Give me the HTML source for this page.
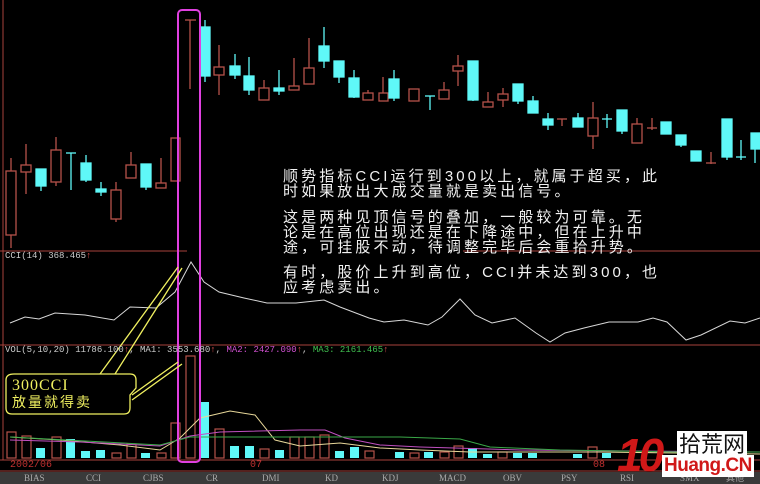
<!DOCTYPE html>
<html><head><meta charset="utf-8"><style>
body{margin:0;background:#000;width:760px;height:484px;overflow:hidden;position:relative;font-family:"Liberation Sans","Noto Sans CJK SC",sans-serif}
.t{position:absolute;left:283px;color:#f2f2f2;font-size:15px;line-height:15px;letter-spacing:3.1px;font-family:"Liberation Sans","Noto Sans CJK SC",sans-serif;white-space:nowrap}
.s{font-family:"Liberation Mono",monospace;font-size:9px;position:absolute;white-space:pre}
.tab{position:absolute;top:472px;height:12px;background:#3a3a3a;width:760px;left:0}
.tab span{position:absolute;top:0;font-family:"Liberation Serif",serif;font-size:9px;color:#aaa;line-height:12px}
</style></head><body>
<svg width="760" height="484" style="position:absolute;left:0;top:0">
<g stroke="#a8423c" fill="none" stroke-width="1">
<line x1="3" y1="0" x2="3" y2="460"/>
<line x1="0" y1="251" x2="187" y2="251"/><line x1="463" y1="251" x2="760" y2="251"/>
<line x1="0" y1="345" x2="760" y2="345"/>
<line x1="0" y1="460" x2="760" y2="460"/>
<line x1="0" y1="471" x2="760" y2="471"/>
</g>
<g stroke="#b5524a" fill="none" stroke-width="1.3">
<line x1="11" y1="158" x2="11" y2="248"/><rect x="6" y="171" width="10" height="64" fill="#000"/>
<line x1="26" y1="144" x2="26" y2="194"/><rect x="21" y="165" width="10" height="7" fill="#000"/>
<line x1="56" y1="137" x2="56" y2="186"/><rect x="51" y="150" width="10" height="32" fill="#000"/>
<line x1="116" y1="182" x2="116" y2="222"/><rect x="111" y="190" width="10" height="29" fill="#000"/>
<line x1="131" y1="152" x2="131" y2="178"/><rect x="126" y="165" width="10" height="13" fill="#000"/>
<line x1="161" y1="158" x2="161" y2="188"/><rect x="156" y="183" width="10" height="5" fill="#000"/>
<rect x="171" y="138" width="9" height="43" fill="#000"/>
<line x1="190" y1="20" x2="190" y2="89"/><line x1="185" y1="20" x2="196" y2="20"/>
<line x1="219" y1="45" x2="219" y2="95"/><rect x="214" y="67" width="10" height="8" fill="#000"/>
<line x1="264" y1="80" x2="264" y2="100"/><rect x="259" y="88" width="10" height="12" fill="#000"/>
<line x1="294" y1="58" x2="294" y2="90"/><rect x="289" y="86" width="10" height="4" fill="#000"/>
<line x1="309" y1="38" x2="309" y2="84"/><rect x="304" y="68" width="10" height="16" fill="#000"/>
<line x1="368" y1="90" x2="368" y2="100"/><rect x="363" y="93" width="10" height="7" fill="#000"/>
<line x1="383" y1="77" x2="383" y2="101"/><rect x="379" y="93" width="9" height="8" fill="#000"/>
<rect x="409" y="89" width="10" height="12" fill="#000"/>
<line x1="444" y1="82" x2="444" y2="99"/><rect x="439" y="90" width="10" height="9" fill="#000"/>
<line x1="458" y1="55" x2="458" y2="86"/><rect x="453" y="66" width="10" height="5" fill="#000"/>
<line x1="488" y1="92" x2="488" y2="107"/><rect x="483" y="102" width="10" height="5" fill="#000"/>
<line x1="503" y1="88" x2="503" y2="107"/><rect x="498" y="94" width="10" height="6" fill="#000"/>
<line x1="562" y1="119" x2="562" y2="126"/><line x1="557" y1="119" x2="567" y2="119"/>
<line x1="593" y1="102" x2="593" y2="149"/><rect x="588" y="118" width="10" height="18" fill="#000"/>
<line x1="637" y1="118" x2="637" y2="143"/><rect x="632" y="124" width="10" height="19" fill="#000"/>
<line x1="652" y1="118" x2="652" y2="130"/><line x1="647" y1="128" x2="657" y2="128"/>
<line x1="711" y1="152" x2="711" y2="164"/><line x1="706" y1="163" x2="716" y2="163"/>
</g>
<g stroke="#5ff8f8" fill="#5ff8f8" stroke-width="1.3">
<line x1="41" y1="169" x2="41" y2="191"/><rect x="36" y="169" width="10" height="17"/>
<line x1="71" y1="153" x2="71" y2="190"/><line x1="66" y1="153" x2="76" y2="153"/>
<line x1="86" y1="155" x2="86" y2="182"/><rect x="81" y="163" width="10" height="17"/>
<line x1="101" y1="182" x2="101" y2="196"/><rect x="96" y="189" width="10" height="3"/>
<line x1="146" y1="164" x2="146" y2="190"/><rect x="141" y="164" width="10" height="23"/>
<line x1="205" y1="20" x2="205" y2="82"/><rect x="200" y="27" width="10" height="49"/>
<line x1="235" y1="54" x2="235" y2="79"/><rect x="230" y="66" width="10" height="9"/>
<line x1="249" y1="57" x2="249" y2="95"/><rect x="244" y="76" width="10" height="14"/>
<line x1="279" y1="70" x2="279" y2="95"/><rect x="274" y="88" width="10" height="3"/>
<line x1="324" y1="27" x2="324" y2="68"/><rect x="319" y="46" width="10" height="15"/>
<line x1="339" y1="61" x2="339" y2="83"/><rect x="334" y="61" width="10" height="16"/>
<line x1="354" y1="70" x2="354" y2="98"/><rect x="349" y="78" width="10" height="19"/>
<line x1="394" y1="70" x2="394" y2="101"/><rect x="389" y="79" width="10" height="19"/>
<line x1="430" y1="96" x2="430" y2="110"/><line x1="425" y1="96" x2="435" y2="96"/>
<line x1="473" y1="61" x2="473" y2="101"/><rect x="468" y="61" width="10" height="39"/>
<line x1="518" y1="84" x2="518" y2="104"/><rect x="513" y="84" width="10" height="17"/>
<line x1="533" y1="96" x2="533" y2="113"/><rect x="528" y="101" width="10" height="12"/>
<line x1="548" y1="113" x2="548" y2="130"/><rect x="543" y="119" width="10" height="6"/>
<line x1="578" y1="113" x2="578" y2="127"/><rect x="573" y="118" width="10" height="9"/>
<line x1="607" y1="114" x2="607" y2="128"/><line x1="602" y1="119" x2="612" y2="119"/>
<line x1="622" y1="110" x2="622" y2="134"/><rect x="617" y="110" width="10" height="21"/>
<rect x="661" y="122" width="10" height="12"/>
<line x1="681" y1="135" x2="681" y2="147"/><rect x="676" y="135" width="10" height="10"/>
<rect x="691" y="151" width="10" height="10"/>
<line x1="727" y1="119" x2="727" y2="160"/><rect x="722" y="119" width="10" height="38"/>
<line x1="741" y1="140" x2="741" y2="160"/><line x1="736" y1="157" x2="746" y2="157"/>
<line x1="755" y1="133" x2="755" y2="163"/><rect x="751" y="133" width="9" height="16"/>
</g>
<polyline fill="none" stroke="#d8d8d8" stroke-width="1" points="10,323 25,317 39,319 55,313 85,315 114,320 130,307 156,308 175,292 191,262 204,282 219,292 244,298 267,303 296,303 324,300 340,307 369,318 384,322 404,320 428,325 442,317 460,299 475,315 492,323 515,318 536,333 550,342 565,333 584,328 609,322 638,322 653,318 667,322 686,340 701,335 730,321 745,323 760,318"/>
<g stroke="#b5524a" fill="#000" stroke-width="1.2">
<rect x="7" y="432" width="9" height="26"/><rect x="22" y="436" width="9" height="22"/><rect x="52" y="437" width="9" height="21"/>
<rect x="112" y="453" width="9" height="5"/><rect x="127" y="444" width="9" height="14"/><rect x="157" y="453" width="9" height="5"/>
<rect x="171" y="423" width="9" height="35"/><rect x="186" y="356" width="9" height="102"/>
<rect x="215" y="429" width="9" height="29"/><rect x="260" y="449" width="9" height="9"/>
<rect x="290" y="437" width="9" height="21"/><rect x="305" y="437" width="9" height="21"/><rect x="320" y="435" width="9" height="23"/>
<rect x="365" y="451" width="9" height="7"/><rect x="410" y="453" width="9" height="5"/><rect x="440" y="452" width="9" height="6"/>
<rect x="454" y="446" width="9" height="12"/><rect x="498" y="452" width="9" height="6"/><rect x="588" y="447" width="9" height="11"/>
</g>
<g fill="#5ff8f8">
<rect x="36" y="448" width="9" height="10"/><rect x="66" y="439" width="9" height="19"/><rect x="81" y="451" width="9" height="7"/>
<rect x="96" y="450" width="9" height="8"/><rect x="141" y="453" width="9" height="5"/><rect x="200" y="402" width="9" height="56"/>
<rect x="230" y="446" width="9" height="12"/><rect x="245" y="446" width="9" height="12"/><rect x="275" y="450" width="9" height="8"/>
<rect x="335" y="451" width="9" height="7"/><rect x="350" y="447" width="9" height="11"/><rect x="395" y="452" width="9" height="6"/>
<rect x="424" y="452" width="9" height="6"/><rect x="468" y="448" width="9" height="10"/><rect x="483" y="454" width="9" height="4"/>
<rect x="513" y="453" width="9" height="5"/><rect x="528" y="453" width="9" height="5"/><rect x="573" y="454" width="9" height="4"/>
<rect x="602" y="453" width="9" height="5"/>
</g>
<polyline fill="none" stroke="#e8d89a" stroke-width="1" points="10,437 60,440 120,445 160,450 180,438 200,418 230,411 255,415 275,440 300,446 340,443 380,448 420,450 470,452 520,452 600,452 760,454"/>
<polyline fill="none" stroke="#c050c0" stroke-width="1" points="10,440 80,442 160,446 190,436 220,432 300,430 325,430 345,438 380,445 420,447 520,450 760,452"/>
<polyline fill="none" stroke="#3aa848" stroke-width="1" points="10,437 160,445 190,437 400,437 460,439 490,447 560,450 680,452 760,452"/>
<rect x="178" y="10" width="22" height="452" rx="4" fill="none" stroke="#e040e0" stroke-width="2"/>
<g stroke="#f0f060" stroke-width="1.3" fill="none">
<path d="M100,374 L178,267 M115,374 L182,268"/>
<path d="M132,400 L182,364 M132,395 L178,362"/>
<path d="M14,374 H130 Q136,374 136,380 V388 L130,395 V408 Q130,414 124,414 H12 Q6,414 6,408 V380 Q6,374 14,374 Z" fill="#000"/>
</g>
</svg>
<div class="t" style="top:169px">顺势指标CCI运行到300以上，就属于超买，此<br>时如果放出大成交量就是卖出信号。</div>
<div class="t" style="top:210px">这是两种见顶信号的叠加，一般较为可靠。无<br>论是在高位出现还是在下降途中，但在上升中<br>途，可挂股不动，待调整完毕后会重拾升势。</div>
<div class="t" style="top:265px">有时，股价上升到高位，CCI并未达到300，也<br>应考虑卖出。</div>
<div class="s" style="left:5px;top:251px;color:#ccc">CCI(14) 368.465<span style="color:#e05050">↑</span></div>
<div class="s" style="left:5px;top:345px;color:#ccc">VOL(5,10,20) 11786.100<span style="color:#e05050">↑</span>, MA1: 3553.680<span style="color:#e05050">↑</span>, <span style="color:#d050d0">MA2: 2427.090</span><span style="color:#e05050">↑</span>, <span style="color:#40c050">MA3: 2161.465</span><span style="color:#e05050">↑</span></div>
<div style="position:absolute;left:12px;top:377px;color:#f0f060;font-family:'Liberation Serif',serif;font-size:16px;line-height:17px;letter-spacing:1px">300CCI<br><span style="font-family:'Noto Sans CJK SC',sans-serif;font-size:14px;letter-spacing:2px">放量就得卖</span></div>
<div class="s" style="left:10px;top:460px;color:#c03030;font-size:10px">2002/06</div>
<div class="s" style="left:250px;top:460px;color:#c03030;font-size:10px">07</div>
<div class="s" style="left:593px;top:460px;color:#c03030;font-size:10px">08</div>
<div class="tab">
<span style="left:24px">BIAS</span><span style="left:86px">CCI</span><span style="left:143px">CJBS</span><span style="left:206px">CR</span><span style="left:262px">DMI</span><span style="left:325px">KD</span><span style="left:382px">KDJ</span><span style="left:439px">MACD</span><span style="left:503px">OBV</span><span style="left:561px">PSY</span><span style="left:620px">RSI</span><span style="left:680px">SMX</span><span style="left:726px">其他</span>
</div>
<div style="position:absolute;left:617px;top:430px;width:130px;height:50px">
<div style="position:absolute;left:0;top:0;font:bold 46px/50px 'Liberation Sans',sans-serif;color:#d01818;letter-spacing:-4px;font-style:italic">10</div>
<div style="position:absolute;left:60px;top:1px;background:#fff;color:#111;font:22px/24px 'Noto Sans CJK SC',sans-serif;padding:0 2px">拾荒网</div>
<div style="position:absolute;left:45px;top:25px;background:#fff;color:#d01818;font:bold 19px/22px 'Liberation Sans',sans-serif;padding:0 2px;letter-spacing:-0.5px">Huang.CN</div>
</div>
</body></html>
